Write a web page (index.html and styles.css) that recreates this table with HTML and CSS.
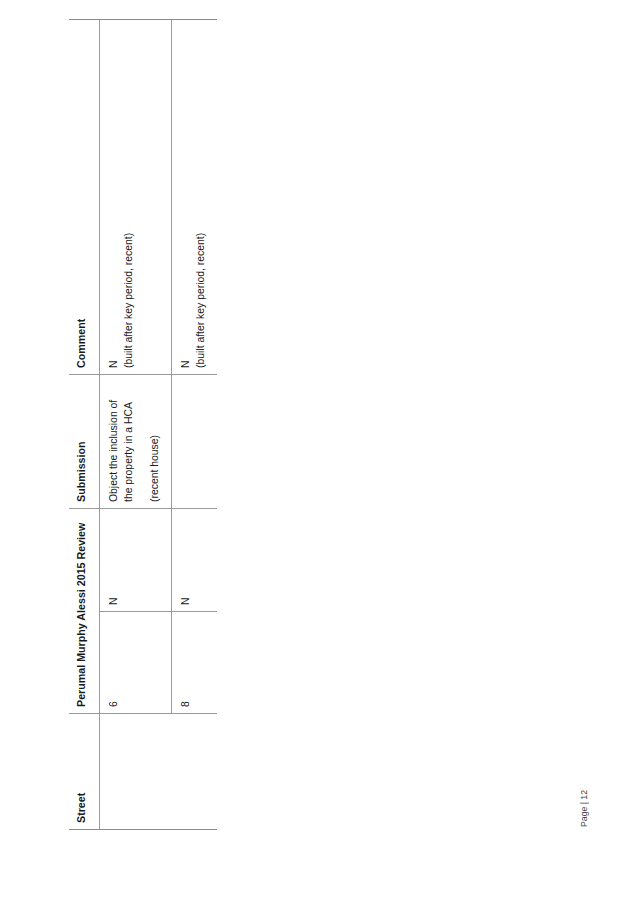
FILE: index.html
```html
<!DOCTYPE html>
<html lang="en">
<head>
<meta charset="utf-8">
<title>Perumal Murphy Alessi 2015 Review</title>
<link rel="stylesheet" href="styles.css">
</head>
<body>
<div class="page">
  <table class="review">
    <colgroup>
      <col class="c-street">
      <col class="c-num">
      <col class="c-hca">
      <col class="c-sub">
      <col class="c-com">
    </colgroup>
    <thead>
      <tr>
        <th>Street</th>
        <th colspan="2">Perumal Murphy Alessi 2015 Review</th>
        <th>Submission</th>
        <th>Comment</th>
      </tr>
    </thead>
    <tbody>
      <tr>
        <td rowspan="2" class="street"></td>
        <td>6</td>
        <td>N</td>
        <td><p>Object the inclusion of<br>the property in a HCA</p><p>(recent house)</p></td>
        <td>N<br>(built after key period, recent)</td>
      </tr>
      <tr>
        <td>8</td>
        <td>N</td>
        <td></td>
        <td>N<br>(built after key period, recent)</td>
      </tr>
    </tbody>
  </table>
  <div class="footer">Page | 12</div>
</div>
</body>
</html>
```
FILE: styles.css
```css
html, body {
  margin: 0;
  padding: 0;
}
body {
  width: 637px;
  height: 902px;
  overflow: hidden;
  background: #ffffff;
  font-family: "Liberation Sans", Arial, sans-serif;
}
/* Landscape sheet shown sideways: text reads bottom to top */
.page {
  width: 637px;
  height: 902px;
  box-sizing: border-box;
  writing-mode: vertical-rl;
  transform: rotate(180deg);
  padding-block-start: 69px;
  padding-inline-start: 72px;
  color: #1a1a1a;
}
.review {
  border-collapse: collapse;
  table-layout: fixed;
  inline-size: 810px;
}
.c-street { inline-size: 116px; }
.c-num { inline-size: 102px; }
.c-hca { inline-size: 103px; }
.c-sub { inline-size: 134px; }
.c-com { inline-size: 355px; }

.review th,
.review td {
  border: none;
  border-inline-start: 1px solid #9a9a9a;
  border-inline-end: 1px solid #9a9a9a;
  border-block-end: 1px solid #9a9a9a;
  text-align: start;
  vertical-align: top;
}
.review th:first-child,
.review td.street {
  border-inline-start: 1.5px solid #8a8a8a;
}
.review th:last-child,
.review td:last-child {
  border-inline-end: 1.5px solid #8a8a8a;
}
.review th {
  font-size: 10.7px;
  font-weight: bold;
  line-height: 13px;
  padding-block: 6px 11px;
  padding-inline: 6px;
}
.review td {
  font-size: 10.4px;
  line-height: 15px;
  padding-block: 6px 9px;
  padding-inline: 6px;
}
.review tbody tr:last-child td,
.review td.street {
  border-block-end: none;
}
.review td p {
  margin: 0;
}
.review td p + p {
  margin-block-start: 11px;
}
.footer {
  margin-block-start: 362px;
  margin-inline-start: 3px;
  font-size: 8.7px;
  line-height: 10px;
  color: #444444;
}
```
